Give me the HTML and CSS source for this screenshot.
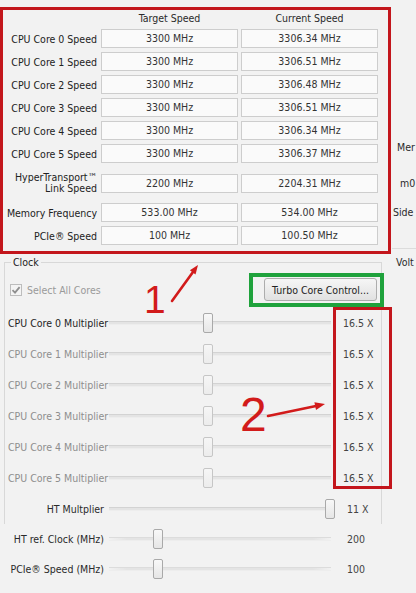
FILE: index.html
```html
<!DOCTYPE html>
<html lang="en">
  <head>
    <meta charset="UTF-8" />
    <title>Clock Settings</title>
    <link rel="stylesheet" href="styles.css">
  </head>
  <body>
    <div class="window">
      <div class="upper">
        <div class="speeds">
          <span></span>
          <span class="col-title">Target Speed</span>
          <span class="col-title">Current Speed</span>

          <span class="speed-label">CPU Core 0 Speed</span>
          <div class="field">3300 MHz</div>
          <div class="field">3306.34 MHz</div>

          <span class="speed-label">CPU Core 1 Speed</span>
          <div class="field">3300 MHz</div>
          <div class="field">3306.51 MHz</div>

          <span class="speed-label">CPU Core 2 Speed</span>
          <div class="field">3300 MHz</div>
          <div class="field">3306.48 MHz</div>

          <span class="speed-label">CPU Core 3 Speed</span>
          <div class="field">3300 MHz</div>
          <div class="field">3306.51 MHz</div>

          <span class="speed-label">CPU Core 4 Speed</span>
          <div class="field">3300 MHz</div>
          <div class="field">3306.34 MHz</div>

          <span class="speed-label">CPU Core 5 Speed</span>
          <div class="field">3300 MHz</div>
          <div class="field">3306.37 MHz</div>

          <span class="speed-label two-line">HyperTransport™<br />Link Speed</span>
          <div class="field">2200 MHz</div>
          <div class="field">2204.31 MHz</div>

          <span class="speed-label">Memory Frequency</span>
          <div class="field">533.00 MHz</div>
          <div class="field">534.00 MHz</div>

          <span class="speed-label">PCIe® Speed</span>
          <div class="field">100 MHz</div>
          <div class="field">100.50 MHz</div>
        </div>
        <div class="side side-upper">
          <div class="side-label mem">Mer</div>
          <div class="side-label mzero">m0</div>
          <div class="side-label sidep">Side</div>
        </div>
      </div>

      <div class="lower">
        <fieldset class="clock">
          <legend>Clock</legend>
          <div class="check-row">
            <label class="check disabled">
              <span class="check-box">
                <svg width="10" height="10" viewBox="0 0 10 10">
                  <path d="M1.5 5.2 L4 7.6 L8.6 2.2" fill="none" stroke="#8f8f8f" stroke-width="1.8" />
                </svg>
              </span>
              Select All Cores
            </label>
            <button class="turbo" type="button">Turbo Core Control...</button>
          </div>

          <div class="mult-row">
            <span class="mult-label">CPU Core 0 Multiplier</span>
            <div class="track"><span class="thumb" style="left: 42.3%"></span></div>
            <span class="mult-value">16.5 X</span>
          </div>
          <div class="mult-row disabled">
            <span class="mult-label">CPU Core 1 Multiplier</span>
            <div class="track"><span class="thumb" style="left: 42.3%"></span></div>
            <span class="mult-value">16.5 X</span>
          </div>
          <div class="mult-row disabled">
            <span class="mult-label">CPU Core 2 Multiplier</span>
            <div class="track"><span class="thumb" style="left: 42.3%"></span></div>
            <span class="mult-value">16.5 X</span>
          </div>
          <div class="mult-row disabled">
            <span class="mult-label">CPU Core 3 Multiplier</span>
            <div class="track"><span class="thumb" style="left: 42.3%"></span></div>
            <span class="mult-value">16.5 X</span>
          </div>
          <div class="mult-row disabled">
            <span class="mult-label">CPU Core 4 Multiplier</span>
            <div class="track"><span class="thumb" style="left: 42.3%"></span></div>
            <span class="mult-value">16.5 X</span>
          </div>
          <div class="mult-row disabled">
            <span class="mult-label">CPU Core 5 Multiplier</span>
            <div class="track"><span class="thumb" style="left: 42.3%"></span></div>
            <span class="mult-value">16.5 X</span>
          </div>
          <div class="mult-row">
            <span class="mult-label right">HT Multplier</span>
            <div class="track"><span class="thumb" style="left: 97.3%"></span></div>
            <span class="mult-value ht">11 X</span>
          </div>
        </fieldset>
        <div class="side side-lower">
          <div class="side-label volt">Volt</div>
        </div>
      </div>

      <div class="ht-rows">
        <div class="mult-row short">
          <span class="mult-label right">HT ref. Clock (MHz)</span>
          <div class="track faded"><span class="thumb" style="left: 19.8%"></span></div>
          <span class="mult-value num">200</span>
        </div>
        <div class="mult-row short">
          <span class="mult-label right">PCIe® Speed (MHz)</span>
          <div class="track faded"><span class="thumb" style="left: 19.8%"></span></div>
          <span class="mult-value num">100</span>
        </div>
      </div>
    </div>

    <!-- annotations drawn over the screenshot -->
    <div class="mark box-speeds"></div>
    <div class="mark box-values"></div>
    <div class="mark box-turbo"></div>
    <span class="hand one">1</span>
    <span class="hand two">2</span>
    <svg class="arrows" width="416" height="593" viewBox="0 0 416 593">
      <line x1="172" y1="301" x2="193" y2="272" stroke="#d21b1b" stroke-width="2.6" stroke-linecap="round" />
      <polygon points="198,265 195.5,274.4 189.9,270.3" fill="#d21b1b" />
      <line x1="268" y1="416" x2="316" y2="406" stroke="#d21b1b" stroke-width="2.6" stroke-linecap="round" />
      <polygon points="325,404 316,410 314.4,402.2" fill="#d21b1b" />
    </svg>
  </body>
</html>
```

FILE: styles.css
```css
body,
html {
  margin: 0;
  padding: 0;
}

body {
  width: 416px;
  height: 593px;
  overflow: hidden;
  position: relative;
  background-color: #f2f2f2;
  font-family: "DejaVu Sans Condensed", "Liberation Sans", Arial, sans-serif;
  font-size: 10.5px;
  color: #1e1e1e;
}

.window {
  width: 416px;
}

.upper {
  display: flex;
}

.speeds {
  width: 392px;
  padding-top: 11px;
  display: grid;
  grid-template-columns: 101px 140px 137px;
  grid-template-rows: 14px repeat(6, 19px) 32px 19px 19px;
  row-gap: 4px;
  align-items: center;
}

.col-title {
  width: 137px;
  text-align: center;
  line-height: 14px;
  color: #2a2a2a;
}

.speed-label {
  text-align: right;
  padding-right: 4px;
  line-height: 12px;
  white-space: nowrap;
  color: #222222;
}

.speed-label.two-line {
  line-height: 11px;
}

.field {
  box-sizing: border-box;
  width: 137px;
  height: 19px;
  line-height: 17px;
  text-align: center;
  background-color: #fafafa;
  border: 1px solid #cdcdcd;
  color: #333333;
}

.side {
  flex: 1;
  overflow: hidden;
  white-space: nowrap;
  color: #2a2a2a;
}

.side-upper {
  box-sizing: border-box;
  height: 249px;
  padding-top: 141px;
  border-bottom: 1px solid #dcdcdc;
}

.side-label {
  line-height: 12px;
}

.side-label.mem {
  padding-left: 5px;
}

.side-label.mzero {
  padding-left: 8px;
  margin-top: 24px;
}

.side-label.sidep {
  padding-left: 1px;
  margin-top: 17px;
}

.lower {
  display: flex;
}

.side-lower {
  padding: 7px 0 0 14px;
}

.clock {
  box-sizing: border-box;
  width: 378px;
  margin: 7px 0 0 4px;
  padding: 0;
  border: 1px solid #d8d8d8;
  border-bottom: none;
  min-width: 0;
}

.clock legend {
  margin-left: 6px;
  padding: 0 2px;
  line-height: 12px;
  color: #222222;
}

.check-row {
  display: flex;
  align-items: center;
  justify-content: space-between;
  height: 23px;
  margin-top: 10px;
  padding: 0 4px 0 5px;
}

.check {
  display: flex;
  align-items: center;
  gap: 5px;
  color: #9a9a9a;
}

.check-box {
  box-sizing: border-box;
  width: 12px;
  height: 12px;
  border: 1px solid #bdbdbd;
  background-color: #f4f4f4;
  display: flex;
  align-items: center;
  justify-content: center;
}

.turbo {
  box-sizing: border-box;
  width: 113px;
  height: 23px;
  padding: 0;
  border: 1px solid #adadad;
  border-radius: 3px;
  background: linear-gradient(#f6f6f6, #e1e1e1);
  font-family: inherit;
  font-size: 10.5px;
  color: #222222;
}

.mult-row {
  display: flex;
  align-items: center;
  height: 31px;
  padding-left: 3px;
}

.check-row + .mult-row {
  margin-top: 6px;
}

.mult-row.short {
  height: 30px;
}

.ht-rows .mult-row {
  padding-left: 8px;
}

.mult-label {
  width: 100px;
  white-space: nowrap;
  color: #1e1e1e;
}

.mult-label.right {
  box-sizing: border-box;
  text-align: right;
  padding-right: 4px;
  color: #2a2a2a;
}

.mult-row.disabled .mult-label {
  color: #8e8e8e;
}

.track {
  position: relative;
  box-sizing: border-box;
  width: 222px;
  height: 4px;
  margin-left: 1px;
  background-color: #e4e4e4;
  border-top: 1px solid #d3d3d3;
  border-bottom: 1px solid #ededed;
}

.track.faded {
  background: linear-gradient(to right, #f2f2f2, #e4e4e4 8%, #e4e4e4 92%, #f2f2f2);
  border-top-color: #dcdcdc;
}

.thumb {
  position: absolute;
  top: -9px;
  box-sizing: border-box;
  width: 10px;
  height: 20px;
  border: 1px solid #a9a9a9;
  border-radius: 2px;
  background: linear-gradient(#f8f8f8, #e6e6e6);
}

.mult-row.disabled .thumb {
  border-color: #c6c6c6;
  background: linear-gradient(#f6f6f6, #ececec);
}

.mult-value {
  margin-left: 12px;
  white-space: nowrap;
  color: #444444;
}

.mult-value.ht,
.mult-value.num {
  margin-left: 16px;
}

.mark {
  position: absolute;
  box-sizing: border-box;
  border: 3px solid #c3161c;
  pointer-events: none;
}

.box-speeds {
  left: 0;
  top: 7px;
  width: 391px;
  height: 247px;
}

.box-values {
  left: 333px;
  top: 307px;
  width: 59px;
  height: 182px;
  border-width: 3.5px;
}

.box-turbo {
  left: 249px;
  top: 273px;
  width: 135px;
  height: 34px;
  border: 4px solid #1fa23c;
}

.hand {
  position: absolute;
  font-family: "Liberation Sans", Arial, sans-serif;
  line-height: 1;
  color: #d21b1b;
}

.hand.one {
  left: 144px;
  top: 280px;
  font-size: 39px;
}

.hand.two {
  left: 240px;
  top: 391px;
  font-size: 48px;
}

.arrows {
  position: absolute;
  left: 0;
  top: 0;
  pointer-events: none;
}
```
